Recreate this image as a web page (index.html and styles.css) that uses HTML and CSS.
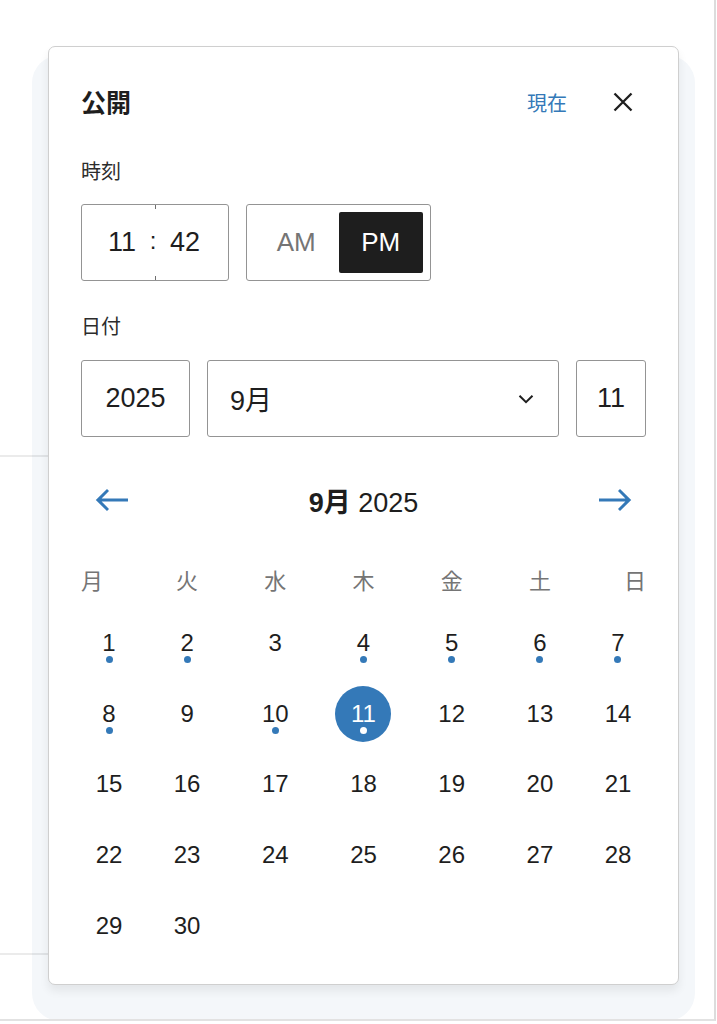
FILE: index.html
```html
<!DOCTYPE html>
<html lang="ja">
<head>
    <meta charset="UTF-8">
    <meta name="viewport" content="width=device-width, initial-scale=1.0">
    <title>公開</title>
    <link rel="stylesheet" href="styles.css">
</head>
<body>
    <div class="screen">
        <div class="rows">
            <div class="row row-first"></div>
            <div class="row row-second"></div>
        </div>
        <div class="backdrop"></div>

        <section class="popover">
            <header class="popover-header">
                <h2 class="popover-title">公開</h2>
                <button class="now-button" type="button">現在</button>
                <button class="close-button" type="button" aria-label="閉じる">
                    <svg width="20" height="20" viewBox="0 0 20 20">
                        <path d="M1.5 1.5L18.5 18.5M18.5 1.5L1.5 18.5" stroke="#1e1e1e" stroke-width="2.3" fill="none"/>
                    </svg>
                </button>
            </header>

            <div class="field-label">時刻</div>
            <div class="time-row">
                <div class="time-field">
                    <span class="time-hours">11</span>
                    <span class="time-sep"><i class="tick"></i><span>:</span><i class="tick"></i></span>
                    <span class="time-minutes">42</span>
                </div>
                <div class="ampm">
                    <button class="ampm-option" type="button">AM</button>
                    <button class="ampm-option is-active" type="button">PM</button>
                </div>
            </div>

            <div class="field-label field-label-date">日付</div>
            <div class="date-row">
                <div class="date-box date-year">2025</div>
                <div class="date-box date-month">
                    <span>9月</span>
                    <svg width="16" height="10" viewBox="0 0 16 10">
                        <path d="M1.5 1.8L8 8.2L14.5 1.8" stroke="#1e1e1e" stroke-width="2" fill="none"/>
                    </svg>
                </div>
                <div class="date-box date-day">11</div>
            </div>

            <div class="cal-header">
                <button class="cal-nav" type="button" aria-label="前へ">
                    <svg width="48" height="48" viewBox="0 0 24 24"><path d="M20 11.2H6.8l3.7-3.7-1-1L3.9 12l5.6 5.5 1-1-3.7-3.7H20z" fill="currentColor"/></svg>
                </button>
                <div class="cal-title"><strong>9月</strong> 2025</div>
                <button class="cal-nav" type="button" aria-label="次へ">
                    <svg width="48" height="48" viewBox="0 0 24 24"><path d="m14.5 6.5-1 1 3.7 3.7H4v1.6h13.2l-3.7 3.7 1 1 5.6-5.5z" fill="currentColor"/></svg>
                </button>
            </div>

            <div class="cal-grid cal-weekdays">
                <span>月</span><span>火</span><span>水</span><span>木</span><span>金</span><span>土</span><span>日</span>
            </div>
            <div class="cal-grid cal-days">
                <button class="day has-events">1</button>
                <button class="day has-events">2</button>
                <button class="day">3</button>
                <button class="day has-events">4</button>
                <button class="day has-events">5</button>
                <button class="day has-events">6</button>
                <button class="day has-events">7</button>
                <button class="day has-events">8</button>
                <button class="day">9</button>
                <button class="day has-events">10</button>
                <button class="day has-events is-selected">11</button>
                <button class="day">12</button>
                <button class="day">13</button>
                <button class="day">14</button>
                <button class="day">15</button>
                <button class="day">16</button>
                <button class="day">17</button>
                <button class="day">18</button>
                <button class="day">19</button>
                <button class="day">20</button>
                <button class="day">21</button>
                <button class="day">22</button>
                <button class="day">23</button>
                <button class="day">24</button>
                <button class="day">25</button>
                <button class="day">26</button>
                <button class="day">27</button>
                <button class="day">28</button>
                <button class="day">29</button>
                <button class="day">30</button>
            </div>
        </section>
    </div>
</body>
</html>
```

FILE: styles.css
```css
* {
    box-sizing: border-box;
}
body {
    margin: 0;
    font-family: "Liberation Sans", "Noto Sans CJK JP", sans-serif;
    color: #1e1e1e;
    background-color: #fff;
}
button {
    font-family: inherit;
    cursor: pointer;
}
.screen {
    position: relative;
    width: 716px;
    height: 1021px;
    border-right: 2px solid #dcdcdc;
    border-bottom: 2px solid #e2e2e2;
    overflow: hidden;
}
.rows {
    position: relative;
    z-index: 1;
    width: 48px;
}
.row {
    border-bottom: 2px solid rgba(0, 0, 0, 0.08);
}
.row-first {
    height: 457px;
}
.row-second {
    height: 498px;
}
.backdrop {
    position: absolute;
    z-index: 0;
    left: 32px;
    top: 55px;
    width: 663px;
    height: 966px;
    border-radius: 28px;
    background-color: #f4f7fa;
}
.popover {
    position: absolute;
    z-index: 2;
    left: 48px;
    top: 46px;
    width: 631px;
    padding: 32px 32px 30px;
    background-color: #fff;
    border: 1px solid #cfcfcf;
    border-radius: 7px;
    box-shadow: 0 6px 10px rgba(0, 0, 0, 0.07);
}
.popover-header {
    display: flex;
    align-items: center;
    height: 46px;
}
.popover-title {
    flex: 1;
    margin: 0 0 3px;
    font-size: 25px;
    font-weight: 700;
}
.now-button {
    margin-right: 33px;
    padding: 0;
    border: none;
    background: none;
    font-size: 20px;
    color: #3479b8;
}
.close-button {
    display: flex;
    align-items: center;
    justify-content: center;
    width: 46px;
    height: 46px;
    padding: 0;
    border: none;
    background: none;
}
.field-label {
    margin: 35px 0 20px;
    font-size: 20px;
    line-height: 24px;
    color: #2c2c2c;
}
.field-label-date {
    margin-top: 34px;
    margin-bottom: 21px;
}
.time-row {
    display: flex;
    gap: 17px;
}
.time-field {
    display: flex;
    width: 148px;
    height: 77px;
    border: 1px solid #949494;
    border-radius: 3px;
    font-size: 27px;
}
.time-hours {
    width: 54px;
    align-self: center;
    text-align: right;
}
.time-sep {
    display: flex;
    flex-direction: column;
    align-items: center;
    justify-content: space-between;
    width: 34px;
    font-size: 24px;
}
.tick {
    display: block;
    flex: 0 0 4px;
    width: 1px;
    height: 4px;
    margin-left: 4px;
    background-color: #6f6f6f;
}
.time-sep span {
    margin-bottom: 3px;
}
.time-minutes {
    align-self: center;
}
.ampm {
    display: flex;
    width: 185px;
    height: 77px;
    padding: 7px;
    border: 1px solid #949494;
    border-radius: 3px;
}
.ampm-option {
    flex: 1;
    padding: 0;
    border: none;
    border-radius: 2px;
    background: none;
    font-size: 26px;
    color: #757575;
}
.ampm-option.is-active {
    background-color: #1e1e1e;
    color: #fff;
}
.date-row {
    display: flex;
    gap: 17px;
    height: 77px;
}
.date-box {
    display: flex;
    align-items: center;
    border: 1px solid #949494;
    border-radius: 3px;
    font-size: 27px;
}
.date-year {
    width: 109px;
    justify-content: center;
}
.date-month {
    flex: 1;
    justify-content: space-between;
    padding: 0 24px 0 22px;
}
.date-day {
    width: 70px;
    justify-content: center;
}
.cal-header {
    display: flex;
    align-items: center;
    justify-content: space-between;
    height: 48px;
    margin-top: 39px;
}
.cal-nav {
    display: flex;
    align-items: center;
    justify-content: center;
    width: 62px;
    height: 48px;
    padding: 0;
    border: none;
    background: none;
    color: #3479b8;
}
.cal-title {
    font-size: 27px;
}
.cal-grid {
    display: grid;
    grid-template-columns: 62px repeat(5, 1fr) 62px;
    justify-items: center;
}
.cal-grid > :nth-child(7n+1) {
    justify-self: start;
}
.cal-grid > :nth-child(7n) {
    justify-self: end;
}
.cal-weekdays {
    margin-top: 44px;
    font-size: 22px;
    line-height: 28px;
    color: #757575;
}
.cal-days {
    margin-top: 19px;
    row-gap: 14.7px;
}
.day {
    position: relative;
    width: 56px;
    height: 56px;
    padding: 0;
    border: none;
    border-radius: 50%;
    background: none;
    font-size: 24px;
    color: #1e1e1e;
}
.day.has-events::after {
    content: "";
    position: absolute;
    left: 50%;
    bottom: 8px;
    width: 7px;
    height: 7px;
    margin-left: -3.5px;
    border-radius: 50%;
    background-color: #3479b8;
}
.day.is-selected {
    background-color: #3479b8;
    color: #fff;
}
.day.is-selected::after {
    background-color: #fff;
}
```
